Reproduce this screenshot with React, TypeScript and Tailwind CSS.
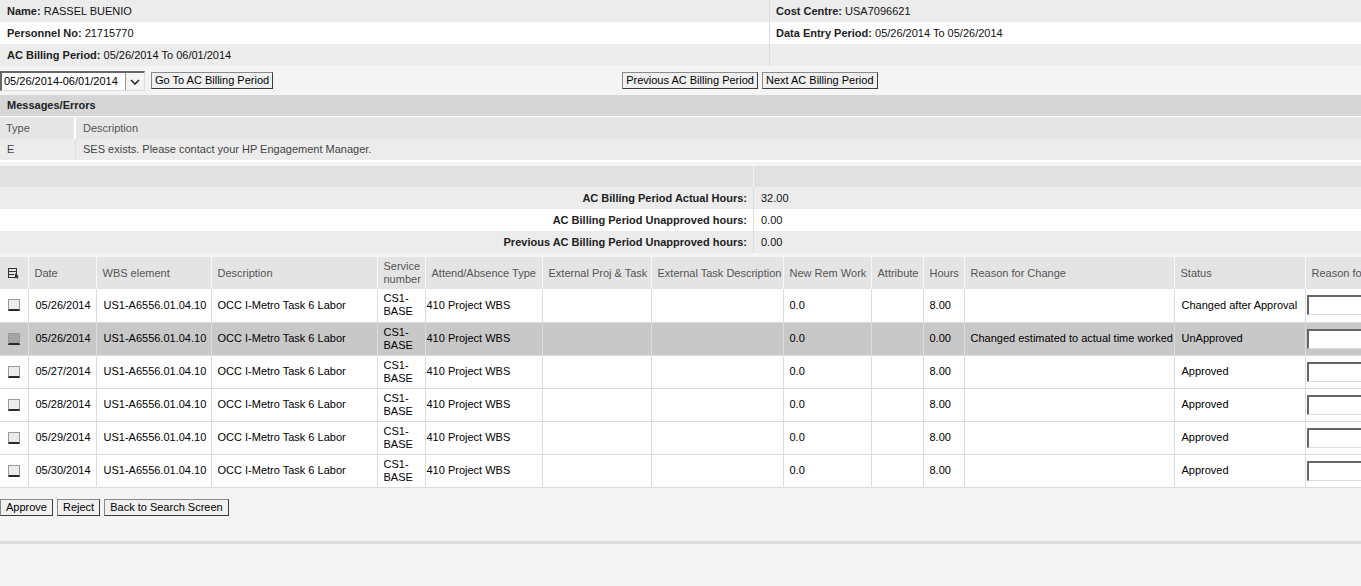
import React from 'react';

const rows = [
  { date: '05/26/2014', hours: '8.00', reason: '', status: 'Changed after Approval', selected: false },
  { date: '05/26/2014', hours: '0.00', reason: 'Changed estimated to actual time worked', status: 'UnApproved', selected: true },
  { date: '05/27/2014', hours: '8.00', reason: '', status: 'Approved', selected: false },
  { date: '05/28/2014', hours: '8.00', reason: '', status: 'Approved', selected: false },
  { date: '05/29/2014', hours: '8.00', reason: '', status: 'Approved', selected: false },
  { date: '05/30/2014', hours: '8.00', reason: '', status: 'Approved', selected: false },
];

const headers = [
  'Date',
  'WBS element',
  'Description',
  'Service number',
  'Attend/Absence Type',
  'External Proj & Task',
  'External Task Description',
  'New Rem Work',
  'Attribute',
  'Hours',
  'Reason for Change',
  'Status',
  'Reason for Rejection',
];

const Btn = ({ children, wide }: { children: React.ReactNode; wide?: boolean }) => (
  <button
    className={`h-[17px] ${wide ? 'px-[5px]' : 'px-[3px]'} bg-[#f0f0f0] border border-[#8a8a8a] border-r-[#3c3c3c] border-b-[#3c3c3c] text-[11px] leading-none text-black`}
  >
    {children}
  </button>
);

const InfoRow = ({ left, right, bg }: { left?: React.ReactNode; right?: React.ReactNode; bg: string }) => (
  <div className={`flex h-[22px] ${bg}`}>
    <div className="w-[770px] flex items-center px-[7px] border-r border-[#dcdcdc]">{left}</div>
    <div className="flex-1 flex items-center px-[6px]">{right}</div>
  </div>
);

const SelectIcon = () => (
  <svg width="12" height="12" viewBox="0 0 12 12" className="mx-auto">
    <rect x="0.5" y="1.5" width="8" height="9" fill="none" stroke="#333" />
    <line x1="0.5" y1="4.5" x2="8.5" y2="4.5" stroke="#333" />
    <line x1="0.5" y1="7.5" x2="6" y2="7.5" stroke="#333" />
    <path d="M7 6 L7 11.5 L8.4 10.2 L9.6 12 L10.4 11.5 L9.3 9.8 L11 9.6 Z" fill="#333" />
  </svg>
);

const Check = ({ dark }: { dark: boolean }) => (
  <div
    className={`mx-auto w-[12px] h-[12px] border border-[#9a9a9a] border-b-[#2a2a2a] border-b-2 ${
      dark ? 'bg-[#a4a4a4] border-[#7a7a7a]' : 'bg-[#ececec]'
    }`}
  />
);

const App = () => {
  return (
    <div className="w-[1361px] h-[586px] overflow-hidden bg-[#f4f4f4] text-[11px] text-[#111] font-['Liberation_Sans',Arial,sans-serif]">
      {/* Header info */}
      <InfoRow
        bg="bg-[#ececec]"
        left={<span><b className="text-[#222]">Name:</b> RASSEL BUENIO</span>}
        right={<span><b className="text-[#222]">Cost Centre:</b> USA7096621</span>}
      />
      <InfoRow
        bg="bg-white"
        left={<span><b className="text-[#222]">Personnel No:</b> 21715770</span>}
        right={<span><b className="text-[#222]">Data Entry Period:</b> 05/26/2014 To 05/26/2014</span>}
      />
      <InfoRow
        bg="bg-[#ececec]"
        left={<span><b className="text-[#222]">AC Billing Period:</b> 05/26/2014 To 06/01/2014</span>}
      />

      {/* Period navigation */}
      <div className="flex items-start h-[29px] pt-[5px]">
        <div className="w-[145px] h-[20px] flex bg-white border-t-2 border-l-2 border-[#666] border-b border-r border-b-[#ddd] border-r-[#ddd]">
          <span className="flex-1 pl-[2px] leading-[17px] text-black">05/26/2014-06/01/2014</span>
          <span className="w-[19px] flex items-center justify-center border-l border-[#999] bg-[#f4f4f4]">
            <svg width="10" height="6" viewBox="0 0 10 6">
              <path d="M1 1 L5 5 L9 1" fill="none" stroke="#222" strokeWidth="1.5" />
            </svg>
          </span>
        </div>
        <div className="ml-[6px] pt-[1px]">
          <Btn>Go To AC Billing Period</Btn>
        </div>
        <div className="ml-[349px] pt-[1px] flex gap-[4px]">
          <Btn>Previous AC Billing Period</Btn>
          <Btn>Next AC Billing Period</Btn>
        </div>
      </div>

      {/* Messages */}
      <div className="h-[22px] bg-[#d6d6d6] border-b border-white flex items-center px-[7px] font-bold text-[#222]">
        Messages/Errors
      </div>
      <div className="flex h-[22px] bg-[#e6e6e6] text-[#555]">
        <div className="w-[76px] flex items-center px-[6px] border-r-2 border-white">Type</div>
        <div className="flex-1 flex items-center px-[7px]">Description</div>
      </div>
      <div className="flex h-[21px] bg-[#ececec] text-[#444]">
        <div className="w-[76px] flex items-center px-[7px] border-r border-[#dcdcdc]">E</div>
        <div className="flex-1 flex items-center px-[7px]">SES exists. Please contact your HP Engagement Manager.</div>
      </div>
      <div className="h-[2px] bg-white" />
      <div className="h-[4px] bg-[#f4f4f4]" />

      {/* Hours summary */}
      <div className="flex h-[21px] bg-[#e2e2e2]">
        <div className="w-[754px] border-r border-[#f4f4f4]" />
        <div className="flex-1" />
      </div>
      {[
        ['AC Billing Period Actual Hours:', '32.00', 'bg-[#ececec]'],
        ['AC Billing Period Unapproved hours:', '0.00', 'bg-white'],
        ['Previous AC Billing Period Unapproved hours:', '0.00', 'bg-[#ececec]'],
      ].map(([label, val, bg]) => (
        <div key={label} className={`flex h-[22px] ${bg}`}>
          <div className="w-[754px] flex items-center justify-end pr-[6px] font-bold text-[#222] border-r border-[#dcdcdc]">
            {label}
          </div>
          <div className="flex-1 flex items-center pl-[7px]">{val}</div>
        </div>
      ))}
      <div className="h-[4px]" />

      {/* Time entries table */}
      <table className="table-fixed border-collapse w-[1425px]">
        <colgroup>
          <col className="w-[28px]" />
          <col className="w-[68px]" />
          <col className="w-[115px]" />
          <col className="w-[166px]" />
          <col className="w-[48px]" />
          <col className="w-[117px]" />
          <col className="w-[109px]" />
          <col className="w-[132px]" />
          <col className="w-[88px]" />
          <col className="w-[52px]" />
          <col className="w-[41px]" />
          <col className="w-[210px]" />
          <col className="w-[131px]" />
          <col className="w-[120px]" />
        </colgroup>
        <thead>
          <tr className="h-[32px] bg-[#e4e4e4] text-[#555]">
            <th className="border-r border-[#f8f8f8] p-0">
              <SelectIcon />
            </th>
            {headers.map((h) => (
              <th
                key={h}
                className="border-r border-[#f8f8f8] pl-[6px] pr-[1px] text-left font-normal leading-[13px] whitespace-nowrap overflow-hidden"
              >
                {h === 'Service number' ? (
                  <span className="whitespace-normal block">Service number</span>
                ) : (
                  h
                )}
              </th>
            ))}
          </tr>
        </thead>
        <tbody>
          {rows.map((r, i) => (
            <tr
              key={i}
              className={`h-[33px] border-b border-[#dcdcdc] ${r.selected ? 'bg-[#c8c8c8]' : 'bg-white'} text-black`}
            >
              <td className="border-r border-[#dcdcdc] p-0">
                <Check dark={r.selected} />
              </td>
              <td className="border-r border-[#dcdcdc] pl-[7px]">{r.date}</td>
              <td className="border-r border-[#dcdcdc] pl-[7px]">US1-A6556.01.04.10</td>
              <td className="border-r border-[#dcdcdc] pl-[6px]">OCC I-Metro Task 6 Labor</td>
              <td className="border-r border-[#dcdcdc] pl-[6px] leading-[13px]">
                CS1-
                <br />
                BASE
              </td>
              <td className="border-r border-[#dcdcdc] pl-[1px]">410 Project WBS</td>
              <td className="border-r border-[#dcdcdc]" />
              <td className="border-r border-[#dcdcdc]" />
              <td className="border-r border-[#dcdcdc] pl-[6px]">0.0</td>
              <td className="border-r border-[#dcdcdc]" />
              <td className="border-r border-[#dcdcdc] pl-[6px]">{r.hours}</td>
              <td className="border-r border-[#dcdcdc] pl-[6px] whitespace-nowrap">{r.reason}</td>
              <td className="border-r border-[#dcdcdc] pl-[7px] whitespace-nowrap">{r.status}</td>
              <td className="pl-[1px]">
                <div className="h-[20px] bg-white border-t-2 border-l-2 border-[#666] border-b border-r border-b-[#ddd] border-r-[#ddd]" />
              </td>
            </tr>
          ))}
        </tbody>
      </table>

      {/* Actions */}
      <div className="flex gap-[4px] mt-[11px]">
        <Btn wide>Approve</Btn>
        <Btn wide>Reject</Btn>
        <Btn wide>Back to Search Screen</Btn>
      </div>
      <div className="h-[25px]" />
      <div className="h-[3px] bg-[#dcdcdc]" />
    </div>
  );
};

export default App;
